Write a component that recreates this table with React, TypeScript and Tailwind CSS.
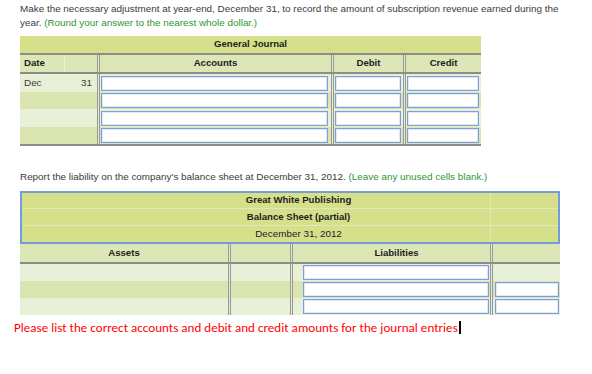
import React from "react";

const Dbl = () => (
  <div className="w-[3px] shrink-0 self-stretch border-x border-[#9a9a94] bg-[#e4e9d0]" />
);

const Inp = ({ w }: { w: string }) => (
  <div className={`h-[15px] ${w} border border-[#7b9ee0] bg-white shadow-[inset_0_0_0_1px_#dfe8f8]`} />
);

export default function App() {
  const rowBg = ["bg-[#e8f0d7]", "bg-[#dbe5b2]", "bg-[#e8f0d7]", "bg-[#dbe5b2]"];
  const rowH = ["h-[18px]", "h-[17px]", "h-[18px]", "h-[17px]"];
  return (
    <div className="w-[592px] h-[374px] bg-white font-['Liberation_Sans',Arial,sans-serif] text-[9.9px] text-[#3a3a3a]">
      <div className="pl-[20px] pt-[2px] pr-[20px] leading-[14px]">
        <div className="whitespace-nowrap">
          Make the necessary adjustment at year-end, December 31, to record the amount of subscription revenue earned during the
        </div>
        <div className="whitespace-nowrap">
          <span>year.</span> <span className="text-[#2f962f]">(Round your answer to the nearest whole dollar.)</span>
        </div>
      </div>

      {/* General Journal */}
      <div className="ml-[20px] mt-[6px] w-[461px]">
        <div className="h-[17px] bg-[#d6e08b] flex items-center justify-center font-bold text-[9.6px] text-[#222]">
          General Journal
        </div>
        <div className="h-[2px] bg-[#8c8c88]" />
        <div className="flex h-[17px] bg-[#dde6b6] font-bold text-[9.6px] text-[#222]">
          <div className="w-[45px] pl-[4px] flex items-center border-r border-[#eef3de]">Date</div>
          <div className="w-[32px]" />
          <Dbl />
          <div className="w-[231px] flex items-center justify-center">Accounts</div>
          <Dbl />
          <div className="w-[69px] flex items-center justify-center">Debit</div>
          <Dbl />
          <div className="w-[75px] flex items-center justify-center">Credit</div>
        </div>
        <div className="h-[2px] bg-[#8c8c88]" />
        {[0, 1, 2, 3].map((i) => (
          <div key={i} className={`flex ${rowH[i]} ${rowBg[i]}`}>
            <div className="w-[45px] pl-[4px] flex items-center">{i === 0 ? "Dec" : ""}</div>
            <div className="w-[32px] pr-[5px] flex items-center justify-end">{i === 0 ? "31" : ""}</div>
            <Dbl />
            <div className="w-[231px] pl-[1px] pr-[3px] flex items-center">
              <Inp w="w-full" />
            </div>
            <Dbl />
            <div className="w-[69px] pl-[1px] pr-[2px] flex items-center">
              <Inp w="w-full" />
            </div>
            <Dbl />
            <div className="w-[75px] pl-[1px] pr-[2px] flex items-center">
              <Inp w="w-full" />
            </div>
          </div>
        ))}
        <div className="h-[2px] bg-[#8c8c88]" />
      </div>

      <div className="pl-[20px] mt-[24px] leading-[14px] whitespace-nowrap">
        <span>Report the liability on the company's balance sheet at December 31, 2012.</span>{" "}
        <span className="text-[#2f962f]">(Leave any unused cells blank.)</span>
      </div>

      {/* Balance Sheet */}
      <div className="ml-[20px] mt-[7px] w-[540px]">
        <div className="border-2 border-[#739cd8] bg-[#d6e08b] text-[#222]">
          {[
            { t: "Great White Publishing", b: true, h: "h-[16px]" },
            { t: "Balance Sheet (partial)", b: true, h: "h-[17px]" },
            { t: "December 31, 2012", b: false, h: "h-[16px]" },
          ].map((r, i) => (
            <div
              key={i}
              className={`flex ${r.h} ${i < 2 ? "border-b border-[#e2e9b6]" : ""}`}
            >
              <div
                className={`w-[468px] pl-[85px] flex items-center justify-center ${r.b ? "font-bold text-[9.6px]" : ""}`}
              >
                {r.t}
              </div>
              <div className="flex-1 border-l border-[#e2e9b6]" />
            </div>
          ))}
        </div>
        <div className="flex h-[18px] bg-[#dde6b6] font-bold text-[9.6px] text-[#222]">
          <div className="w-[208px] flex items-center justify-center">Assets</div>
          <Dbl />
          <div className="w-[59px]" />
          <Dbl />
          <div className="w-[197px] pl-[10px] flex items-center justify-center">Liabilities</div>
          <Dbl />
          <div className="w-[67px]" />
        </div>
        <div className="h-[2px] bg-[#8c8c88]" />
        {[0, 1, 2].map((i) => (
          <div key={i} className={`flex h-[17px] ${i === 1 ? "bg-[#dbe5b2]" : "bg-[#e8f0d7]"}`}>
            <div className="w-[208px]" />
            <Dbl />
            <div className="w-[59px]" />
            <Dbl />
            <div className="w-[197px] pl-[10px] pr-[1px] flex items-center">
              <Inp w="w-full" />
            </div>
            <Dbl />
            <div className="w-[67px] pl-[2px] pr-[1px] flex items-center">
              {i > 0 ? <Inp w="w-full" /> : null}
            </div>
          </div>
        ))}
      </div>

      <div className="pl-[14px] mt-[5px] leading-[16px] text-[13px] tracking-[0.04px] text-[#ff0000] font-['Carlito','Lato',sans-serif] whitespace-nowrap">
        Please list the correct accounts and debit and credit amounts for the journal entries
        <span className="inline-block w-[2px] h-[13px] bg-black align-[-2px] ml-[1px]" />
      </div>
    </div>
  );
}
